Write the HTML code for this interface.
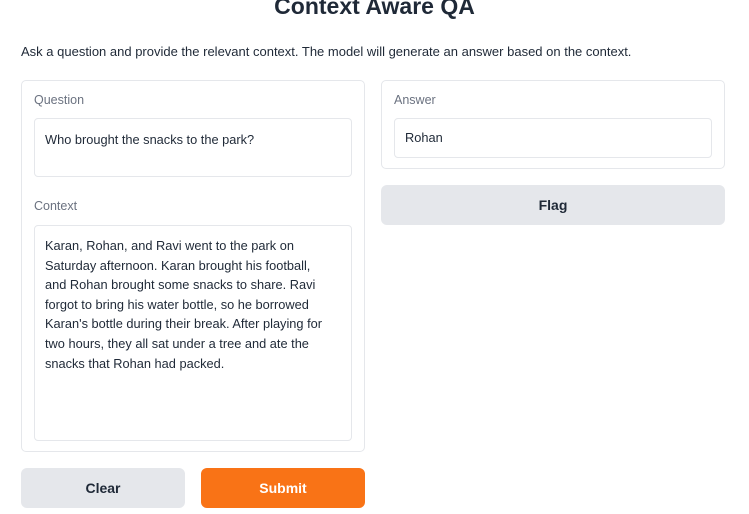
<!DOCTYPE html>
<html><head><style>
body{margin:0;width:749px;height:514px;background:#fff;font-family:"Liberation Sans",sans-serif;color:#1f2937;position:relative;overflow:hidden}
.a{position:absolute}
h1{position:absolute;left:0;width:749px;top:-7px;margin:0;text-align:center;font-size:23px;font-weight:bold;color:#1f2937}
.desc{left:21px;top:44px;font-size:13px;color:#1f2937;white-space:nowrap}
.panel{border:1px solid #e5e7eb;border-radius:5px;background:#fff;box-sizing:border-box}
.lbl{font-size:12.5px;color:#6b7280}
.box{border:1px solid #e5e7eb;border-radius:4px;box-sizing:border-box;font-size:12.8px;color:#1f2937;padding:11px 10px;white-space:nowrap}
.btn{border-radius:6px;font-weight:bold;font-size:14px;display:flex;align-items:center;justify-content:center;box-sizing:border-box}
</style></head><body>
<h1>Context Aware QA</h1>
<div class="a desc">Ask a question and provide the relevant context. The model will generate an answer based on the context.</div>
<div class="a panel" style="left:21px;top:80px;width:344px;height:372px"></div>
<div class="a lbl" style="left:34px;top:93px">Question</div>
<div class="a box" style="left:34px;top:118px;width:318px;height:59px;padding-top:13px">Who brought the snacks to the park?</div>
<div class="a lbl" style="left:34px;top:199px">Context</div>
<div class="a box" style="left:34px;top:225px;width:318px;height:216px;line-height:19.6px;padding-top:10px">Karan, Rohan, and Ravi went to the park on<br>Saturday afternoon. Karan brought his football,<br>and Rohan brought some snacks to share. Ravi<br>forgot to bring his water bottle, so he borrowed<br>Karan's bottle during their break. After playing for<br>two hours, they all sat under a tree and ate the<br>snacks that Rohan had packed.</div>
<div class="a panel" style="left:381px;top:80px;width:344px;height:89px"></div>
<div class="a lbl" style="left:394px;top:93px">Answer</div>
<div class="a box" style="left:394px;top:118px;width:318px;height:40px;padding-top:11px">Rohan</div>
<div class="a btn" style="left:381px;top:185px;width:344px;height:40px;background:#e5e7eb;color:#1f2937">Flag</div>
<div class="a btn" style="left:21px;top:468px;width:164px;height:40px;background:#e5e7eb;color:#1f2937">Clear</div>
<div class="a btn" style="left:201px;top:468px;width:164px;height:40px;background:#f97316;color:#fff">Submit</div>
</body></html>
